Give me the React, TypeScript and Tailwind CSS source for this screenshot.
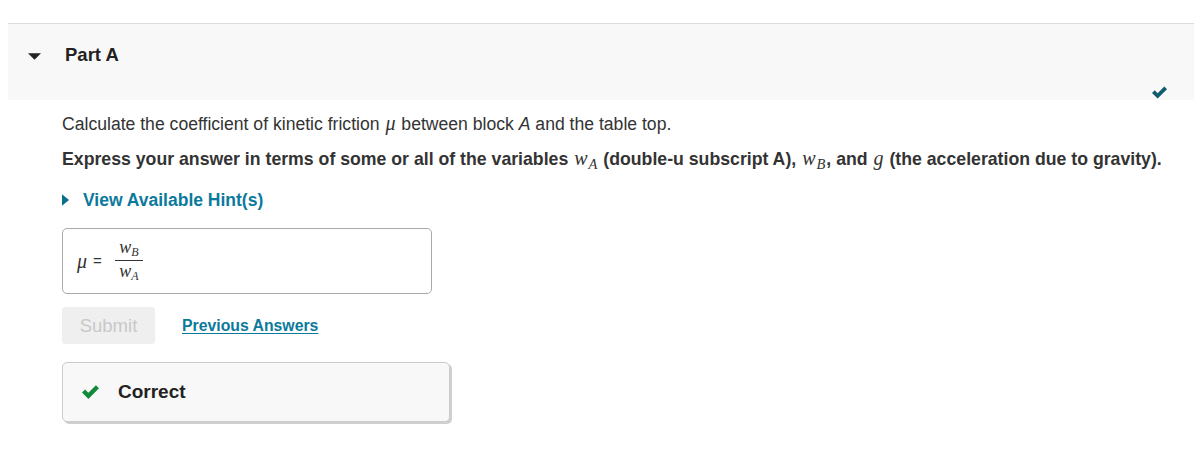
import React from 'react'

const math = { fontFamily: '"Liberation Serif", "DejaVu Serif", serif' }

function MathVar({ v, sub }: { v: string; sub?: string }) {
  return (
    <span className="italic font-normal text-[20px] leading-none mx-[1px]" style={math}>
      {v}
      {sub && <span className="text-[14.5px] relative top-[4px] ml-[1px]">{sub}</span>}
    </span>
  )
}

function Check({ className }: { className: string }) {
  return (
    <svg viewBox="0 0 16 13" className={className} fill="currentColor">
      <path d="M0 7 L2.9 4.1 L6 7.2 L13.1 0.1 L16 3 L6 13 Z" />
    </svg>
  )
}

export default function App() {
  return (
    <div className="w-[1194px] h-[452px] bg-white text-[#333]" style={{ fontFamily: '"Liberation Sans", Arial, sans-serif' }}>
      <div className="pt-[23px] pl-2">
        <div className="relative h-[77px] bg-[#f8f8f8] border-t border-[#dcdcdc] flex items-start pt-[20px]">
          <span className="ml-[19px] w-[14px] flex justify-center mt-[9px]">
            <svg viewBox="0 0 14 7" className="w-[13px] h-[7px]" fill="#222"><path d="M0 0 H14 L7 7 Z" /></svg>
          </span>
          <h2 className="ml-[24px] text-[18.5px] font-bold text-[#222] leading-[22px]">Part A</h2>
          <Check className="absolute right-[27px] bottom-[1px] w-[15px] h-[13px] text-[#0f5b70]" />
        </div>
      </div>

      <div className="pl-[62px]">
        <p className="mt-[13px] text-[17.6px] leading-[22px]">
          Calculate the coefficient of kinetic friction <MathVar v="μ" /> between block <i>A</i> and the table top.
        </p>
        <p className="mt-[13px] text-[17.7px] leading-[22px] font-bold">
          Express your answer in terms of some or all of the variables <MathVar v="w" sub="A" /> (double-u subscript A),{' '}
          <MathVar v="w" sub="B" />, and <MathVar v="g" /> (the acceleration due to gravity).
        </p>

        <div className="mt-[20px] flex items-center text-[#0b7a9c] font-bold text-[17.5px] leading-[20px]">
          <svg viewBox="0 0 6 10" className="w-[7px] h-[12px] mr-[14px]" fill="#0b6f8c"><path d="M0 0 L6 5 L0 10 Z" /></svg>
          View Available Hint(s)
        </div>

        <div className="mt-[18px] w-[370px] h-[66px] border border-[#aaa] rounded-[5px] flex items-center pl-[14px]">
          <span className="italic text-[20px]" style={math}>μ</span>
          <span className="ml-[6px] text-[15px]">=</span>
          <span className="ml-[13px] -mt-[3px] inline-flex flex-col items-center text-[18px] leading-[16px]" style={math}>
            <span className="italic px-[1px]">w<span className="text-[12px] relative top-[3px]">B</span></span>
            <span className="w-[28px] border-t border-[#333] mt-[3px] mb-[2px]" />
            <span className="italic px-[1px]">w<span className="text-[12px] relative top-[3px]">A</span></span>
          </span>
        </div>

        <div className="mt-[13px] flex items-center">
          <button className="w-[93px] h-[37px] bg-[#efefef] text-[#c8c8c8] text-[18.5px] rounded-[3px]">Submit</button>
          <a className="ml-[27px] text-[#0b7a9c] font-bold text-[15.8px] underline underline-offset-2">Previous Answers</a>
        </div>

        <div className="mt-[18px] w-[388px] h-[60px] bg-[#f8f8f8] border border-[#ccc] rounded-[5px] shadow-[2px_2px_0_#cfcfcf] flex items-center pl-[19px]">
          <Check className="w-[17px] h-[14px] text-[#118a3a]" />
          <span className="ml-[19px] text-[19px] font-bold text-[#222]">Correct</span>
        </div>
      </div>
    </div>
  )
}
